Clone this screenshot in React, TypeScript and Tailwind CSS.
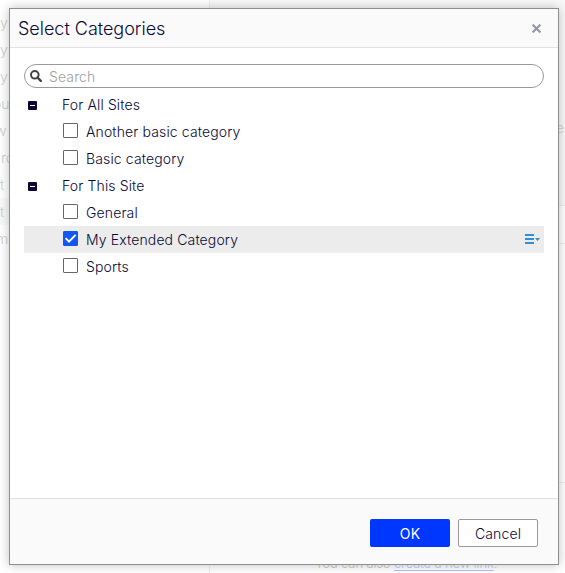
import React from "react";

type Category = { name: string; checked?: boolean };

const groups: { title: string; items: Category[] }[] = [
  { title: "For All Sites", items: [{ name: "Another basic category" }, { name: "Basic category" }] },
  {
    title: "For This Site",
    items: [{ name: "General" }, { name: "My Extended Category", checked: true }, { name: "Sports" }],
  },
];

const navEnds = ["y", "y", "y", "ou", "w", "ro", "t", "t", "m"];

function PageBehind() {
  return (
    <div className="flex h-full text-[14px] text-[#cfcfcf]">
      <div className="h-full w-[210px] shrink-0 border-r border-[#eeeeee] bg-white pt-[9px]">
        {navEnds.map((end, i) => (
          <div key={i} className={`flex h-[27px] items-center ${i === 7 ? "bg-[#f9f9f9]" : ""}`}>
            <span className={i === 5 ? "pl-px" : i === 3 ? "-ml-[7px]" : i === 4 ? "-ml-[5px]" : i === 8 ? "-ml-[4px]" : ""}>{end}</span>
          </div>
        ))}
      </div>
      <div className="flex min-w-0 flex-1 flex-col bg-white">
        <div className="flex h-[206px] items-start justify-end border-b border-[#eeeeee] bg-[#f9f9f9] pt-[117px]">
          <span className="mr-[1px]">e</span>
        </div>
        <div className="h-[38px] border-b border-[#eeeeee]" />
        <div className="h-[239px] border-b border-[#eeeeee]" />
        <div className="pt-[70px] pl-[105px] text-[13px] leading-[20px] tracking-[-0.14px] text-[#c8c8c8]">
          You can also{" "}
          <span className="text-[#c3cbf5] underline decoration-[#b4c0fa] decoration-1 underline-offset-2">create a new link</span>.
        </div>
      </div>
    </div>
  );
}

function Check({ checked }: { checked?: boolean }) {
  return (
    <span
      className={`-mt-[3px] flex size-[15px] shrink-0 items-center justify-center rounded-[1px] border ${
        checked ? "border-[#1456f1] bg-[#1456f1]" : "border-[#666666] bg-white"
      }`}
    >
      {checked && (
        <svg className="shrink-0" width="13" height="13" viewBox="0 0 13 13" fill="none">
          <path d="M1.6 6.2 5 9.6 11.6 2.8" stroke="white" strokeWidth="1.9" />
        </svg>
      )}
    </span>
  );
}

function MenuIcon() {
  return (
    <svg className="-mt-[2px]" width="15" height="10" viewBox="0 0 15 10" fill="#2f8fdb">
      <path d="M0 0h9v2H0zM0 4h9v2H0zM0 8h9v2H0zM10 4h5l-2.5 3z" />
    </svg>
  );
}

export default function App() {
  return (
    <div className="relative h-[573px] w-[565px] overflow-hidden bg-white font-['Inter',sans-serif] font-light">
      <PageBehind />
      <div className="absolute top-[8px] left-[9px] flex h-[557px] w-[550px] flex-col border border-[#8e8e8e] bg-white text-[14px] tracking-[0.13px] text-[#080736] shadow-[0_0_10px_rgba(0,0,0,0.25)]">
        <header className="flex h-[39px] shrink-0 items-center justify-between border-b border-[#e0e0e0] bg-[#fafafa] pr-[17px] pl-[8px]">
          <h1 className="mt-[2px] text-[18px] leading-[24px] tracking-[-0.02px]">Select Categories</h1>
          <svg width="9" height="9" viewBox="0 0 9 9" fill="none">
            <path d="M.6.6l7.8 7.8M8.4.6.6 8.4" stroke="#8e979c" strokeWidth="2.1" />
          </svg>
        </header>
        <main className="flex-1 px-[14px] pt-[16px]">
          <div className="flex h-[24px] items-center rounded-full border border-[#999999] pl-[5px]">
            <svg width="12" height="12" viewBox="0 0 12 12" fill="none" stroke="#444444">
              <circle cx="4.8" cy="4.8" r="3.8" strokeWidth="2" />
              <path d="M7.5 7.5 10.8 10.8" strokeWidth="2.4" strokeLinecap="round" />
            </svg>
            <span className="ml-[7px] pt-px text-[#a0a0a0]">Search</span>
          </div>
          <div className="pt-[3px]">
            {groups.map((group) => (
              <section key={group.title}>
                <div className="flex h-[27px] items-center pl-[4px]">
                  <span className="mt-px flex size-[9px] items-center justify-center rounded-[1px] bg-[#080736]">
                    <span className="h-px w-[5px] bg-white" />
                  </span>
                  <span className="ml-[25px]">{group.title}</span>
                </div>
                {group.items.map((item) => (
                  <div
                    key={item.name}
                    className={`flex h-[27px] items-center pr-[4px] pl-[39px] ${item.checked ? "bg-[#ececec]" : ""}`}
                  >
                    <Check checked={item.checked} />
                    <span className="ml-[8px] flex-1">{item.name}</span>
                    {item.checked && <MenuIcon />}
                  </div>
                ))}
              </section>
            ))}
          </div>
        </main>
        <footer className="flex h-[66px] shrink-0 items-start justify-end gap-[8px] border-t border-[#e0e0e0] bg-[#fafafa] pt-[20px] pr-[20px]">
          <button className="h-[28px] w-[80px] rounded-[2px] bg-[#0037ff] font-normal text-white">OK</button>
          <button className="h-[28px] w-[80px] rounded-[2px] border border-[#999999] bg-white">Cancel</button>
        </footer>
      </div>
    </div>
  );
}
